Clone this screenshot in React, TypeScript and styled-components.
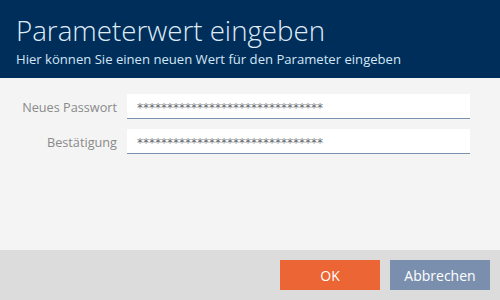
import React from "react";
import styled, { createGlobalStyle } from "styled-components";

const Global = createGlobalStyle`
  html, body { margin: 0; padding: 0; }
  body { width: 500px; height: 300px; overflow: hidden; font-family: "Open Sans", "Noto Sans", sans-serif; }
`;

const Dialog = styled.div`
  width: 500px;
  height: 300px;
  display: flex;
  flex-direction: column;
  background: #f4f4f4;
`;

const Header = styled.header`
  height: 78px;
  box-sizing: border-box;
  background: #002e5a;
  padding: 12px 16px 0 16px;
`;

const Title = styled.h1`
  margin: 0;
  font-weight: 300;
  font-size: 27.7px;
  line-height: 36px;
  color: #dfecf6;
`;

const Subtitle = styled.p`
  margin: 2px 0 0 0;
  font-size: 13.1px;
  line-height: 18px;
  color: #d2e6f5;
`;

const Body = styled.main`
  flex: 1;
  padding: 16px 30px 0 0;
  display: grid;
  grid-template-columns: 117px 343px;
  grid-auto-rows: 25px;
  column-gap: 10px;
  row-gap: 10px;
  align-content: start;
`;

const Label = styled.label`
  text-align: right;
  align-self: center;
  font-size: 12.7px;
  color: #8a8a8a;
  line-height: 18px;
`;

const Field = styled.div`
  background: #fff;
  border-bottom: 1px solid #7b8fb0;
  box-sizing: border-box;
  height: 25px;
  display: flex;
  align-items: center;
  padding: 4px 0 0 10px;
  font-family: "DejaVu Sans", sans-serif;
  font-size: 12px;
  color: #666a70;
`;

const Footer = styled.footer`
  height: 50px;
  background: #dcdcdc;
  display: flex;
  justify-content: flex-end;
  align-items: flex-start;
  padding: 10px 10px 0 0;
  box-sizing: border-box;
  gap: 10px;
`;

const Button = styled.button<{ $variant: "primary" | "secondary" }>`
  width: 100px;
  height: 30px;
  border: none;
  margin: 0;
  padding: 0;
  font-family: "Open Sans", "Noto Sans", sans-serif;
  font-size: 14px;
  color: #fff;
  background: ${(p) => (p.$variant === "primary" ? "#eb6535" : "#7a8fae")};
`;

const stars = "*".repeat(31);

export default function App() {
  return (
    <>
      <Global />
      <Dialog>
        <Header>
          <Title>Parameterwert eingeben</Title>
          <Subtitle>Hier können Sie einen neuen Wert für den Parameter eingeben</Subtitle>
        </Header>
        <Body>
          <Label>Neues Passwort</Label>
          <Field>{stars}</Field>
          <Label>Bestätigung</Label>
          <Field>{stars}</Field>
        </Body>
        <Footer>
          <Button $variant="primary">OK</Button>
          <Button $variant="secondary">Abbrechen</Button>
        </Footer>
      </Dialog>
    </>
  );
}
